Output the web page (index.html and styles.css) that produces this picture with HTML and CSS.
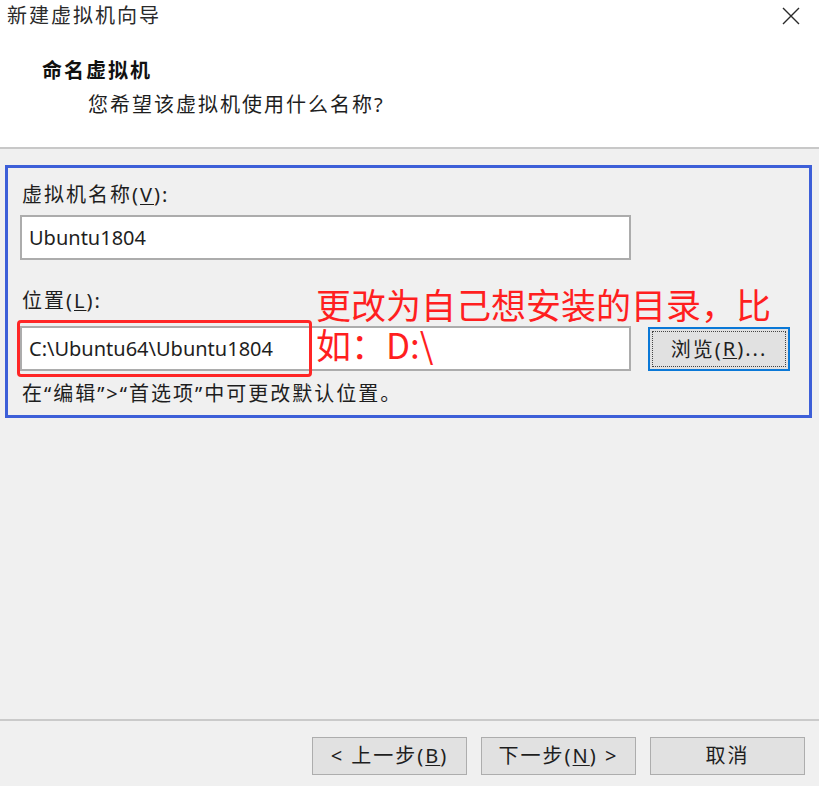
FILE: index.html
```html
<!DOCTYPE html>
<html lang="zh-CN">
<head>
<meta charset="utf-8">
<title>新建虚拟机向导</title>
<link rel="stylesheet" href="styles.css">
</head>
<body>
<div class="window">
  <header class="header">
    <div class="titlebar">
      <span class="title cjk">新建虚拟机向导</span>
      <svg class="close" width="18" height="18" viewBox="0 0 18 18" aria-hidden="true">
        <path d="M1 1 L17 17 M17 1 L1 17" stroke="#2a2a2a" stroke-width="1.4" fill="none"/>
      </svg>
    </div>
    <div class="heading cjk">命名虚拟机</div>
    <div class="subheading cjk">您希望该虚拟机使用什么名称?</div>
  </header>

  <main class="content">
    <section class="group">
      <div class="label cjk">虚拟机名称(<u>V</u>):</div>
      <div class="field name-field">Ubuntu1804</div>

      <div class="label loc-label cjk">位置(<u>L</u>):</div>
      <div class="loc-row">
        <div class="field loc-field">C:\Ubuntu64\Ubuntu1804</div>
        <button class="btn browse cjk"><span class="focus">浏览(<u>R</u>)...</span></button>
      </div>
      <div class="hint cjk">在“编辑”&gt;“首选项”中可更改默认位置。</div>
    </section>

    <div class="highlight"></div>
    <div class="note">更改为自己想安装的目录，比<br>如：D:\</div>
  </main>

  <footer class="footer">
    <button class="btn nav cjk">&lt; 上一步(<u>B</u>)</button>
    <button class="btn nav cjk">下一步(<u>N</u>) &gt;</button>
    <button class="btn nav cjk">取消</button>
  </footer>
</div>
</body>
</html>
```

FILE: styles.css
```css
html, body {
  margin: 0;
  padding: 0;
}
body {
  width: 819px;
  height: 786px;
  overflow: hidden;
  font-family: "Noto Sans", "Noto Sans CJK SC", sans-serif;
  font-size: 20px;
  color: #1e1e1e;
  background: #f0f0f0;
}
.cjk {
  letter-spacing: 2px;
}
u {
  text-decoration-thickness: 1px;
  text-underline-offset: 2px;
}
.window {
  display: flex;
  flex-direction: column;
  height: 786px;
}

/* header */
.header {
  background: #ffffff;
  height: 147px;
  border-bottom: 2px solid #c8c8c8;
  box-sizing: content-box;
}
.titlebar {
  height: 32px;
  display: flex;
  align-items: center;
  justify-content: space-between;
  padding: 0 19px 0 7px;
}
.title {
  line-height: 32px;
  color: #2a2a2a;
}
.close {
  display: block;
}
.heading {
  margin-top: 27px;
  padding-left: 42px;
  line-height: 24px;
  font-weight: 700;
  color: #111;
}
.subheading {
  margin-top: 10px;
  padding-left: 88px;
  line-height: 24px;
}

/* content */
.content {
  position: relative;
  flex: 1;
  padding-top: 16px;
}
.group {
  margin-left: 5px;
  width: 807px;
  box-sizing: border-box;
  border: 3px solid #3d5fd8;
  padding: 15px 12px 9px 12px;
}
.label {
  line-height: 24px;
  padding-left: 2px;
}
.field {
  background: #fff;
  border: 2px solid #acacac;
  box-sizing: border-box;
  height: 45px;
  width: 611px;
  padding-left: 7px;
  display: flex;
  align-items: center;
  line-height: 24px;
}
.name-field {
  margin-top: 8px;
}
.loc-label {
  margin-top: 29px;
}
.loc-row {
  margin-top: 13px;
  display: flex;
  align-items: center;
  gap: 17px;
}
.hint {
  margin-top: 11px;
  line-height: 24px;
  padding-left: 2px;
}

/* buttons */
.btn {
  font-family: "Noto Sans", "Noto Sans CJK SC", sans-serif;
  font-size: 20px;
  color: #1e1e1e;
  background: #e1e1e1;
  border: 1px solid #adadad;
  padding: 0;
  margin: 0;
}
.browse {
  width: 142px;
  height: 44px;
  border: 2px solid #0a78d7;
  padding: 2px;
  box-sizing: border-box;
}
.focus {
  display: flex;
  align-items: center;
  justify-content: center;
  height: 100%;
  border: 1px dotted #444;
  box-sizing: border-box;
}

/* annotation overlays */
.highlight {
  position: absolute;
  left: 17px;
  top: 171px;
  width: 295px;
  height: 57px;
  box-sizing: border-box;
  border: 3px solid #ff2626;
  border-radius: 4px;
}
.note {
  position: absolute;
  left: 316px;
  top: 135px;
  font-family: "Noto Sans CJK SC", sans-serif;
  font-size: 35px;
  line-height: 40px;
  color: #ff1f1f;
  white-space: nowrap;
}

/* footer */
.footer {
  border-top: 2px solid #cacaca;
  display: flex;
  justify-content: flex-end;
  align-items: flex-start;
  gap: 14px;
  padding: 16px 14px 0 0;
  box-sizing: border-box;
  height: 67px;
}
.nav {
  width: 155px;
  height: 38px;
  line-height: 36px;
}
```
